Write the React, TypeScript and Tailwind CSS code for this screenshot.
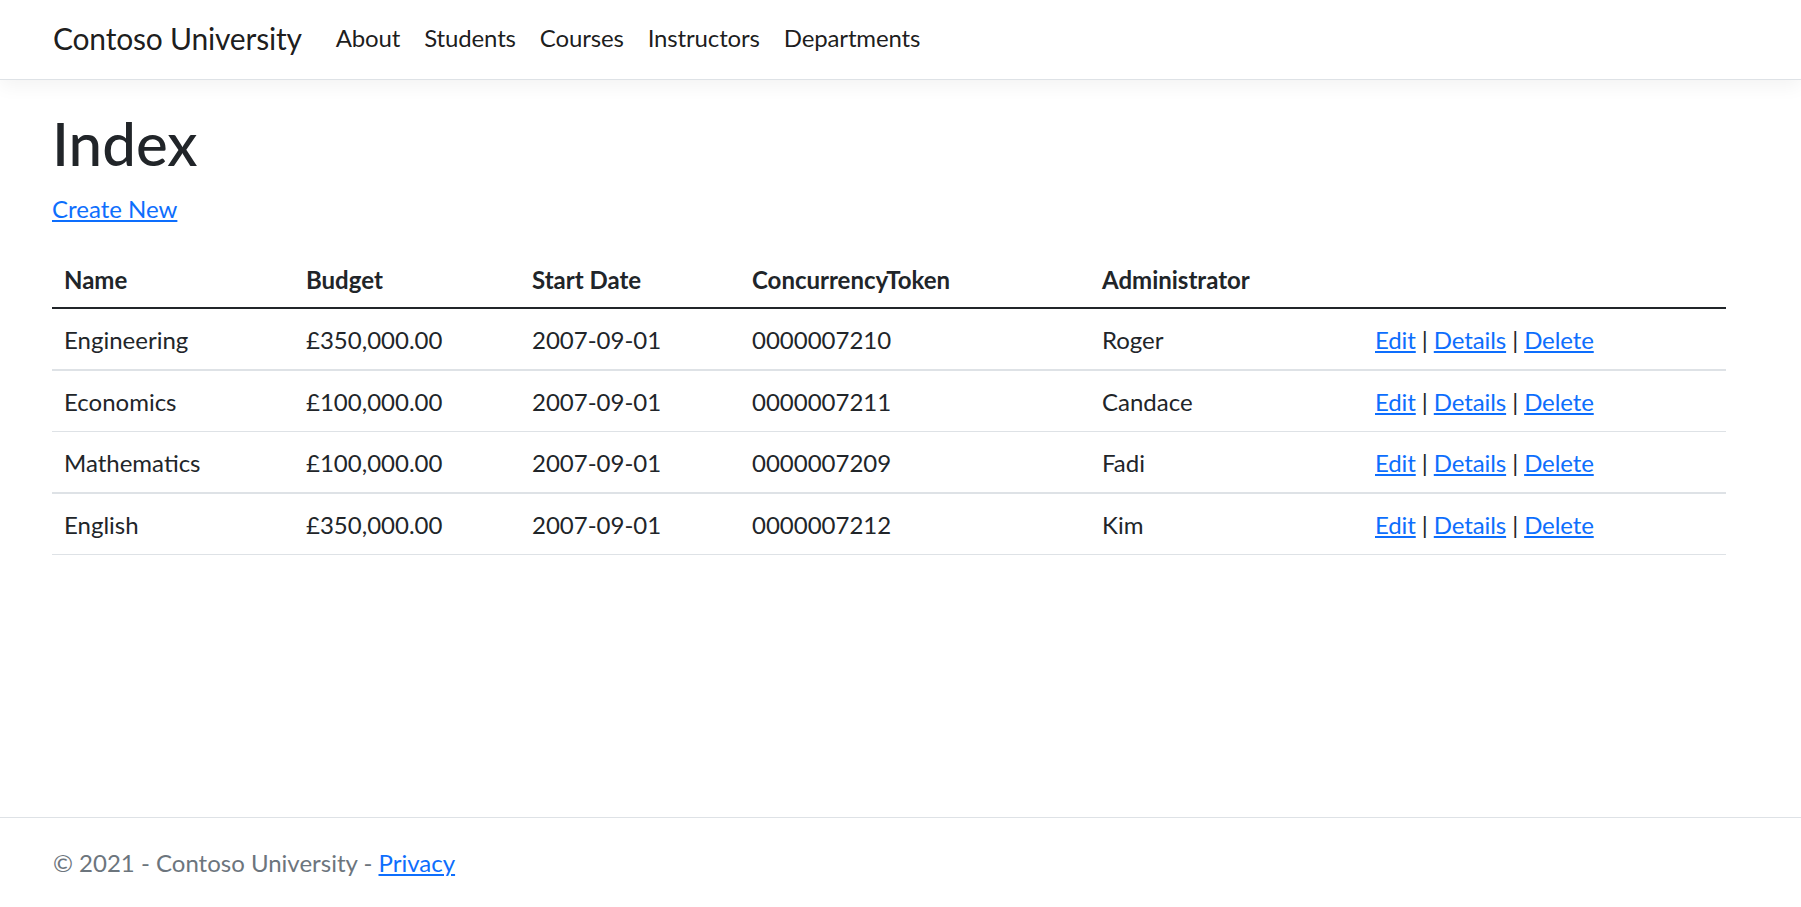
const departments = [
  { name: "Engineering", budget: "£350,000.00", start: "2007-09-01", token: "0000007210", admin: "Roger" },
  { name: "Economics", budget: "£100,000.00", start: "2007-09-01", token: "0000007211", admin: "Candace" },
  { name: "Mathematics", budget: "£100,000.00", start: "2007-09-01", token: "0000007209", admin: "Fadi" },
  { name: "English", budget: "£350,000.00", start: "2007-09-01", token: "0000007212", admin: "Kim" },
];

const navLinks = ["About", "Students", "Courses", "Instructors", "Departments"];

export default function App() {
  return (
    <div className="min-h-screen flex flex-col bg-white text-[#212529] font-['Segoe_UI',Lato,'Liberation_Sans',sans-serif] text-[24px] leading-[36px]">
      {/* Navbar */}
      <header className="h-[80px] border-b border-[#dee2e6] bg-white shadow-[0_6px_18px_rgba(0,0,0,0.05)] flex items-center pl-[53px] pb-[3px]">
        <a href="#" className="text-[30px] leading-[45px] tracking-[-0.2px] text-[rgba(0,0,0,0.9)] mr-[22px]">
          Contoso University
        </a>
        <nav className="flex">
          {navLinks.map((l) => (
            <a key={l} href="#" className="px-[12px] tracking-[-0.15px] text-[rgba(0,0,0,0.9)]">
              {l}
            </a>
          ))}
        </nav>
      </header>

      {/* Content */}
      <main className="flex-1 pl-[52px] pr-[75px] pt-[27px]">
        <h1 className="text-[60px] leading-[72px] font-medium mb-[12px]">Index</h1>
        <p className="mb-[22px]">
          <a href="#" className="text-[#0d6efd] underline">
            Create New
          </a>
        </p>
        <table className="w-full table-fixed border-collapse text-left">
          <thead>
            <tr className="border-b-2 border-[#212529]">
              <th className="w-[242px] px-[12px] pt-[13px] pb-[9px] font-bold">Name</th>
              <th className="w-[226px] px-[12px] pt-[13px] pb-[9px] font-bold">Budget</th>
              <th className="w-[220px] px-[12px] pt-[13px] pb-[9px] font-bold">Start Date</th>
              <th className="w-[350px] px-[12px] pt-[13px] pb-[9px] font-bold">ConcurrencyToken</th>
              <th className="w-[273px] px-[12px] pt-[13px] pb-[9px] font-bold">Administrator</th>
              <th className="px-[12px] pt-[13px] pb-[9px]"></th>
            </tr>
          </thead>
          <tbody>
            {departments.map((d, i) => (
              <tr
                key={d.token}
                className={i % 2 === 0 ? "border-b-2 border-[#dee2e6]" : "border-b border-[#dee2e6]"}
              >
                <td className="px-[12px] pt-[13px] pb-[11px]">{d.name}</td>
                <td className="px-[12px] pt-[13px] pb-[11px]">{d.budget}</td>
                <td className="px-[12px] pt-[13px] pb-[11px]">{d.start}</td>
                <td className="px-[12px] pt-[13px] pb-[11px]">{d.token}</td>
                <td className="px-[12px] pt-[13px] pb-[11px]">{d.admin}</td>
                <td className="px-[12px] pt-[13px] pb-[11px] tracking-[-0.1px]">
                  <a href="#" className="text-[#0d6efd] underline">Edit</a> |{" "}
                  <a href="#" className="text-[#0d6efd] underline">Details</a> |{" "}
                  <a href="#" className="text-[#0d6efd] underline">Delete</a>
                </td>
              </tr>
            ))}
          </tbody>
        </table>
      </main>

      {/* Footer */}
      <footer className="h-[90px] border-t border-[#dee2e6] pl-[53px] flex items-center text-[#6c757d] whitespace-nowrap">
        <span>
          © 2021 - Contoso University -{" "}
          <a href="#" className="text-[#0d6efd] underline">
            Privacy
          </a>
        </span>
      </footer>
    </div>
  );
}
